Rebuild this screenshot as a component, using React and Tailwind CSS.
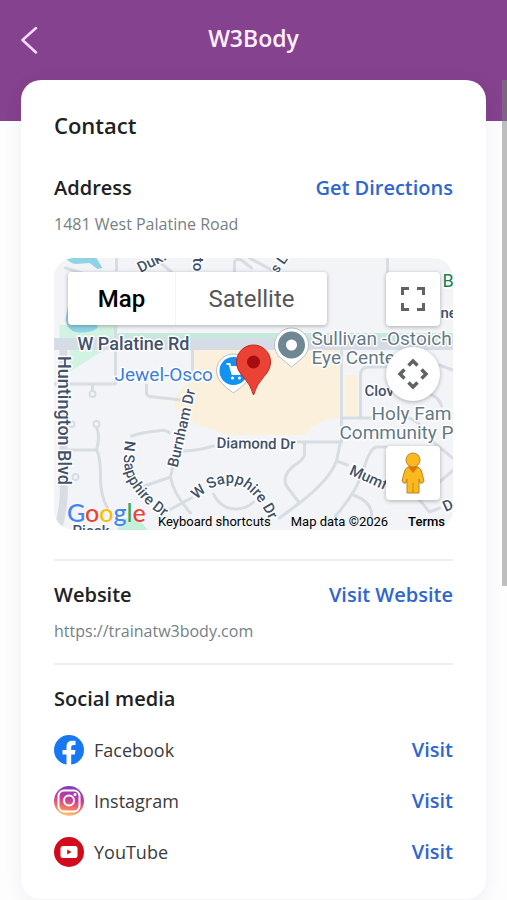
import React from 'react';

const roads = [
  'M66 268 L92 276 M117 258 V270',
  'M116 328 V384 H54 M64 345 V356 M160 262 L172 272',
  'M235 272 V262 Q236 258 242 260 L252 268',
  'M388 258 V275 M250 258 L276 272',
  'M93 384 V391 M193 350 V374',
  'M147 385 V393 Q147 397 155 397 L182 400',
  'M68 450 H97 M97 427 Q101 436 97 450 Q101 456 101 478 Q101 496 108 508',
  'M132 436 Q144 432 158 431 Q166 429 170 433 M181 451 Q198 451 214 446',
  'M142 487 L171 477 Q174 494 191 513 M166 512 L192 498 M171 477 L173 468',
  'M214 494 Q222 510 238 509 Q248 508 254 502',
  'M298 442 H341 L337 461 Q330 480 300 503 L280 518',
  'M305 442 V455 Q304 460 294 466 Q282 476 287 486 L300 503',
  'M337 461 L348 465 M388 447 H376 Q369 451 364 470 Q357 492 336 516 M354 495 Q373 502 372 516',
  'M342 350 V442 M342 418 H372 M361 418 V375 Q361 367 370 367 H388 M440 365 L453 370',
  'M432 395 Q440 398 442 406 M434 442 L453 458 M440 482 L454 470',
  'M420 500 L430 512 L440 508',
  'M410 418 Q414 420 420 424',
];

const small = [[93, 394], [97, 424], [76, 477], [72, 424]];

function MapLabel({ children, className = '', fill = '#43526b', size = 17, ...rest }) {
  return (
    <text
      fill={fill}
      stroke="#ffffff"
      strokeWidth="3"
      strokeLinejoin="round"
      fontSize={size}
      className={`[paint-order:stroke] ${className}`}
      {...rest}
    >
      {children}
    </text>
  );
}

function MapCanvas() {
  return (
    <svg
      viewBox="54 258 400 272"
      preserveAspectRatio="xMidYMid slice"
      className="block h-full w-full font-[Roboto,sans-serif]"
      role="img"
      aria-label="Map around 1481 West Palatine Road"
    >
      <defs>
        <path id="sapphireNorth" d="M126 440 Q121 468 131 484 Q142 503 168 520" />
        <path id="sapphireWest" d="M197 500 Q214 483 231 483 Q252 484 270 520" />
      </defs>
      <rect x="54" y="258" width="400" height="272" fill="#f3f4f7" />
      <path d="M60 325 H118 V345 Q96 354 86 362 L70 372 V345 H60Z" fill="#d3f3e2" />
      <path d="M68 308 H98 V328 Q90 334 76 332 Q68 330 66 320 Z M66 258 H97 L103 268 L98 269 L90 263 L76 264 Q70 263 66 258Z" fill="#8ed4e4" />
      <path d="M118 333 H454 V339 H118Z" fill="#c5eadb" />
      <path d="M54 338 H454 V350 H54Z" fill="#d6dce5" />
      <path d="M193 350 H340 V418 Q314 420 306 435 H228 L196 424 L174 406 Q176 390 193 380Z M345 375 H358 V416 H345Z" fill="#fbf0dc" />
      <path d="M118 530 Q120 518 128 518 Q142 519 148 530Z" fill="#c5eed8" />
      <g fill="none" stroke="#d8dde3" strokeWidth="3" strokeLinecap="round" strokeLinejoin="round">
        {roads.map((d) => <path key={d} d={d} />)}
        <path d="M64 350 V480 Q66 505 58 530" strokeWidth="8" />
      </g>
      <g fill="#f3f4f7" stroke="#d8dde3" strokeWidth="2">
        {small.map(([x, y]) => <circle key={`${x}-${y}`} cx={x} cy={y} r="3" />)}
      </g>

      <g fontWeight="500">
        <MapLabel x="78" y="350" size={18}>W Palatine Rd</MapLabel>
        <MapLabel size={18} transform="translate(58 356) rotate(90)">Huntington Blvd</MapLabel>
        <MapLabel size={15} transform="translate(178 468) rotate(-77)">Burnham Dr</MapLabel>
        <MapLabel size={15} transform="translate(217 448) rotate(1)">Diamond Dr</MapLabel>
        <MapLabel size={15} transform="translate(349 474) rotate(24)">Mumf</MapLabel>
        <MapLabel size={15} transform="translate(141 273) rotate(-27)">Duk.</MapLabel>
        <MapLabel size={15} transform="translate(193 254) rotate(90)">lto</MapLabel>
        <MapLabel size={14} transform="translate(278 274) rotate(-55)">s L</MapLabel>
        <MapLabel x="365" y="396" size={15}>Clov</MapLabel>
        <MapLabel x="441" y="318" size={15}>ne</MapLabel>
        <MapLabel x="73" y="536" size={15}>Picek</MapLabel>
        <MapLabel size={15} transform="translate(446 512) rotate(-24)">D</MapLabel>
        <MapLabel size={15}><textPath href="#sapphireNorth">N Sapphire Dr</textPath></MapLabel>
        <MapLabel size={15}><textPath href="#sapphireWest">W Sapphire Dr</textPath></MapLabel>
      </g>
      <MapLabel x="443" y="287" fill="#158052" size={18}>B</MapLabel>
      <MapLabel x="115" y="381" fill="#3b7ddd" size={19}>Jewel-Osco</MapLabel>
      <MapLabel x="312" y="345" fill="#667986" size={19}>Sullivan -Ostoich</MapLabel>
      <MapLabel x="312" y="364" fill="#667986" size={19}>Eye Center</MapLabel>
      <MapLabel x="372" y="420" fill="#667986" size={19}>Holy Fam</MapLabel>
      <MapLabel x="340" y="439" fill="#667986" size={19}>Community P</MapLabel>

      <path d="M234 393 Q217 382 217 371 A17 17 0 0 1 251 371 Q251 382 234 393Z" fill="#fff" stroke="#b9c0c6" />
      <circle cx="234" cy="371" r="14" fill="#1292f1" />
      <path d="M227 364 H230 L233 374 H240 L242 367 H231" fill="none" stroke="#fff" strokeWidth="2" />
      <path d="M231 367 H242 L240 374 H233Z" fill="#fff" />
      <circle cx="233" cy="378" r="1.500" fill="#fff" />
      <circle cx="240" cy="378" r="1.500" fill="#fff" />

      <path d="M292 367 L280 357 A17 17 0 1 1 304 357Z" fill="#fff" stroke="#b9c0c6" />
      <circle cx="292" cy="345" r="13.500" fill="#6f8792" />
      <circle cx="292" cy="345" r="5.500" fill="#fff" />

      <path d="M254 395 Q252 386 244 377 Q237 370 237 362 A17 17 0 0 1 271 362 Q271 370 264 377 Q256 386 254 395Z" fill="#ea4335" stroke="#c5221f" />
      <circle cx="254" cy="362" r="6.500" fill="#a50e0e" />
    </svg>
  );
}

function Pegman() {
  return (
    <svg viewBox="0 0 24 42" className="h-[42px] w-6" aria-hidden="true">
      <path d="M7 15 Q12 13 17 15 Q20 16 21 21 L23 29 Q22 32 19 31 L18 27 V41 H6 V27 L5 31 Q2 32 1 29 L3 21 Q4 16 7 15Z" fill="#fbb91d" stroke="#b88632" />
      <path d="M12 31 V41" stroke="#c98710" />
      <circle cx="12" cy="8" r="7" fill="#fbb91d" stroke="#b88632" />
      <path d="M7 15 H17 L12 21Z" fill="#e8710a" />
    </svg>
  );
}

function LocationMap() {
  return (
    <div className="relative mt-6 h-[272px] overflow-hidden rounded-[20px] font-[Roboto,sans-serif]">
      <MapCanvas />
      <div className="absolute left-3.5 top-3.5 flex h-[53px] rounded-sm bg-white shadow-[0_1px_4px_#0000004d]">
        <button className="w-[108px] border-r border-gray-100 text-2xl font-medium text-black">Map</button>
        <button className="w-[151px] text-2xl text-[#565656]">Satellite</button>
      </div>
      <div className="absolute right-[13px] top-3.5 flex flex-col">
        <button aria-label="Toggle fullscreen view" className="flex size-[54px] items-center justify-center rounded-sm bg-white shadow-[0_1px_4px_#0000004d]">
          <svg viewBox="0 0 24 24" className="size-6" fill="none" stroke="#5f6368" strokeWidth="3" aria-hidden="true">
            <path d="M1.500 8 V1.500 H8 M16 1.500 H22.500 V8 M22.500 16 V22.500 H16 M8 22.500 H1.500 V16" />
          </svg>
        </button>
        <button aria-label="Map camera controls" className="mt-[21px] flex size-[54px] items-center justify-center rounded-full bg-white shadow-[0_1px_4px_#0000004d]">
          <svg viewBox="0 0 32 32" className="size-8" fill="none" stroke="#5f6368" strokeWidth="3.500" aria-hidden="true">
            <path d="M11.500 7.500 L16 3 L20.500 7.500 M24.500 11.500 L29 16 L24.500 20.500 M20.500 24.500 L16 29 L11.500 24.500 M7.500 20.500 L3 16 L7.500 11.500" />
          </svg>
        </button>
        <button aria-label="Street View" className="mt-[45px] flex size-[54px] items-center justify-center rounded-sm bg-white shadow-[0_1px_4px_#0000004d]">
          <Pegman />
        </button>
      </div>
      <a href="#google" aria-label="Google" className="absolute bottom-0.5 left-[13px] font-[Lato,sans-serif] text-[25px] font-medium leading-8 [text-shadow:0_0_2px_white]">
        <span className="text-[#4285f4]">G</span><span className="text-[#ea4335]">o</span><span className="text-[#fbbc05]">o</span><span className="text-[#4285f4]">g</span><span className="text-[#34a853]">l</span><span className="text-[#ea4335]">e</span>
      </a>
      <div className="absolute bottom-0 right-2 flex h-4 items-center gap-5 whitespace-nowrap text-[13px] leading-4 text-black">
        <button>Keyboard shortcuts</button>
        <span>Map data ©2026</span>
        <a href="#terms" className="font-medium">Terms</a>
      </div>
    </div>
  );
}

function FacebookIcon() {
  return (
    <svg viewBox="0 0 30 30" className="size-[30px]" aria-hidden="true">
      <circle cx="15" cy="15" r="15" fill="#1877f2" />
      <path d="M12.500 30 V19.500 H8.500 V15 H12.500 V11.600 Q12.500 5.800 18.300 5.800 H21.500 V10 H19.300 Q17.200 10 17.200 12.200 V15 H21.500 L20.800 19.500 H17.200 V30Z" fill="#fff" />
    </svg>
  );
}

function InstagramIcon() {
  return (
    <svg viewBox="0 0 30 30" className="size-[30px]" aria-hidden="true">
      <defs>
        <linearGradient id="insta" x1="0.600" y1="0" x2="0.400" y2="1">
          <stop offset="0" stopColor="#7b3fc4" />
          <stop offset="0.450" stopColor="#ca3d96" />
          <stop offset="0.750" stopColor="#f17a62" />
          <stop offset="1" stopColor="#fdd17d" />
        </linearGradient>
      </defs>
      <circle cx="15" cy="15" r="15" fill="url(#insta)" />
      <g fill="none" stroke="#fff" strokeWidth="2">
        <rect x="4.500" y="4.500" width="21" height="21" rx="5.500" />
        <circle cx="15" cy="14.500" r="5" />
      </g>
      <circle cx="21" cy="8.500" r="1.500" fill="#fff" />
    </svg>
  );
}

function YouTubeIcon() {
  return (
    <svg viewBox="0 0 30 30" className="size-[30px]" aria-hidden="true">
      <circle cx="15" cy="15" r="15" fill="#d20a1c" />
      <rect x="6.500" y="9" width="17" height="12" rx="2.500" fill="#fff" />
      <path d="M13.200 12.500 L17.500 15 L13.200 17.500Z" fill="#d20a1c" />
    </svg>
  );
}

const socials = [
  { name: 'Facebook', Icon: FacebookIcon },
  { name: 'Instagram', Icon: InstagramIcon },
  { name: 'YouTube', Icon: YouTubeIcon },
];

function SectionHead({ title, link }) {
  return (
    <div className="flex items-center justify-between text-[20px] font-semibold leading-7">
      <h3 className="text-[#202123]">{title}</h3>
      {link && <a href="#visit" className="text-[#2f66cf]">{link}</a>}
    </div>
  );
}

export default function App() {
  return (
    <div className="relative min-h-screen bg-[#fdfdfe] font-['Open_Sans',sans-serif]">
      <header className="grid h-[121px] grid-cols-[1fr_auto_1fr] items-start bg-[#85428e] px-5 pt-5">
        <button aria-label="Back" className="flex h-10 w-6 items-center text-[#f8d8fa]">
          <svg viewBox="0 0 18 28" className="h-7 w-[18px]" fill="none" stroke="currentColor" strokeWidth="2.500" strokeLinecap="round" strokeLinejoin="round" aria-hidden="true">
            <path d="M16 2 L2.500 14 L16 26.500" />
          </svg>
        </button>
        <h1 className="text-[23px] font-semibold leading-9 text-[#fff0ff]">W3Body</h1>
      </header>
      <main className="relative mx-[21px] -mt-[41px] rounded-[20px] bg-white px-[33px] pb-8 pt-[31px] shadow-[0_4px_20px_#2020400f]">
        <h2 className="text-[22px] font-semibold leading-7 text-[#202123]">Contact</h2>
        <section className="mt-[35px]">
          <SectionHead title="Address" link="Get Directions" />
          <p className="mt-3 text-[16px] leading-5 text-[#768085]">1481 West Palatine Road</p>
          <LocationMap />
        </section>
        <section className="mt-[29px] border-y-2 border-[#eeeeef] pb-[22px] pt-5">
          <SectionHead title="Website" link="Visit Website" />
          <p className="mt-3 text-[16px] leading-5 text-[#768085]">https://trainatw3body.com</p>
        </section>
        <section className="mt-5">
          <SectionHead title="Social media" />
          <ul className="mt-[22px] flex flex-col gap-[21px]">
            {socials.map(({ name, Icon }) => (
              <li key={name} className="flex h-[30px] items-center gap-2.5">
                <Icon />
                <span className="text-[18px] text-[#3b3b3d]">{name}</span>
                <a href="#visit" aria-label={`Visit ${name}`} className="ml-auto text-[20px] font-semibold text-[#2f66cf]">Visit</a>
              </li>
            ))}
          </ul>
        </section>
      </main>
      <div className="absolute right-0 top-20 h-[506px] w-[5px] bg-[#80808080]" aria-hidden="true" />
    </div>
  );
}
